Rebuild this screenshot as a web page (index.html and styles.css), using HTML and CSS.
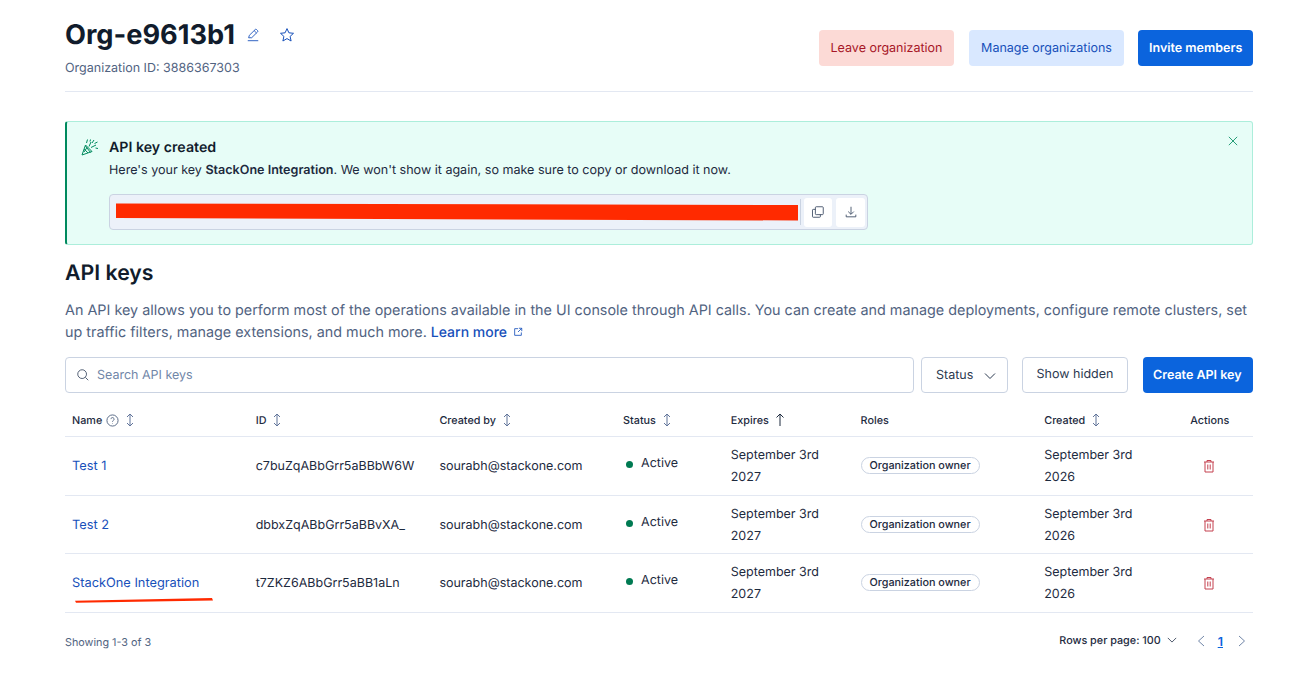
FILE: index.html
```html
<!DOCTYPE html>
<html lang="en">
<head>
<meta charset="utf-8">
<title>Org-e9613b1</title>
<link rel="stylesheet" href="styles.css">
</head>
<body>
<main class="page">
  <header class="org-header">
    <div class="org-info">
      <div class="org-title-row">
        <h1>Org-e9613b1</h1>
        <svg class="ic edit" viewBox="0 0 16 16"><path d="M2 14.500h12M3 11.200 3.800 8.400 10.600 1.700a1 1 0 0 1 1.400 0l1.300 1.300a1 1 0 0 1 0 1.400L6.500 11.100z M9.300 3 12 5.700" /></svg>
        <svg class="ic star" viewBox="0 0 16 16"><path d="M8 1.600 9.900 5.800 14.500 6.300 11.100 9.400 12.100 14 8 11.600 3.900 14 4.900 9.400 1.500 6.300 6.100 5.800z"/></svg>
      </div>
      <p class="org-id">Organization ID: 3886367303</p>
    </div>
    <div class="org-actions">
      <button class="btn btn-danger">Leave organization</button>
      <button class="btn btn-soft">Manage organizations</button>
      <button class="btn btn-primary">Invite members</button>
    </div>
  </header>

  <section class="callout">
    <svg class="party" viewBox="0 0 18 18"><path d="M1 17 4.500 7 11 13.500z M3.200 11 7 15 M4.500 8 9.500 14.500 M6 9.500 3 14 M8 8.500 10 4 M5.500 5 6.500 1.500 M10 9.500 15 7 M9.500 1.500 9 3.500 M13 2 11 5 M16.500 4 13.500 5.500 M17 10.500 14.500 10"/></svg>
    <div class="callout-body">
      <h3>API key created</h3>
      <p>Here's your key <strong>StackOne Integration</strong>. We won't show it again, so make sure to copy or download it now.</p>
      <div class="key-box">
        <svg class="redact" viewBox="0 0 682 18" preserveAspectRatio="none"><polygon points="0,0.500 682,2 682,17.500 0,15"/></svg>
        <span class="key-sep"></span>
        <button class="key-btn"><svg class="ic dark" viewBox="0 0 16 16"><rect x="5" y="2" width="9" height="9" rx="1"/><path d="M5 5H2.500a.8.8 0 0 0-.8.8v7.400a.8.8 0 0 0 .8.8h7.400a.8.8 0 0 0 .8-.8V11"/></svg></button>
        <button class="key-btn"><svg class="ic dark" viewBox="0 0 16 16"><path d="M8 2v8.500M4.800 7.500 8 10.700l3.200-3.200M2.500 11v2.500h11V11"/></svg></button>
      </div>
    </div>
    <svg class="close" viewBox="0 0 12 12"><path d="M1 1 11 11M11 1 1 11"/></svg>
  </section>

  <h2>API keys</h2>
  <p class="intro">An API key allows you to perform most of the operations available in the UI console through API calls. You can create and manage deployments, configure remote clusters, set up traffic filters, manage extensions, and much more. <a href="#">Learn more</a> <svg class="ext" viewBox="0 0 12 12"><path d="M6 2H2v8h8V6.500M7 1.500h3.500V5M10.500 1.500 6 6"/></svg></p>

  <div class="toolbar">
    <label class="search">
      <svg class="ic dark" viewBox="0 0 16 16"><circle cx="7" cy="7" r="5"/><path d="M10.700 10.700 14 14"/></svg>
      <span>Search API keys</span>
    </label>
    <button class="btn btn-outline status-btn">Status <svg class="chev" viewBox="0 0 12 12"><path d="M1 3.500 6 8.500l5-5"/></svg></button>
    <button class="btn btn-outline hidden-btn">Show hidden</button>
    <button class="btn btn-primary create-btn">Create API key</button>
  </div>

  <table>
    <colgroup>
      <col class="c-name"><col class="c-id"><col class="c-by"><col class="c-status"><col class="c-exp"><col class="c-roles"><col class="c-created"><col class="c-act">
    </colgroup>
    <thead>
      <tr>
        <th>Name <svg class="help" viewBox="0 0 14 14"><circle cx="7" cy="7" r="6"/><path d="M5.300 5.500a1.700 1.700 0 1 1 2.600 1.500c-.6.400-.9.700-.9 1.300M7 10.200v.5"/></svg> <svg class="sort" viewBox="0 0 10 14"><path d="M5 1v12M2 4 5 1l3 3M2 10l3 3 3-3"/></svg></th>
        <th>ID <svg class="sort" viewBox="0 0 10 14"><path d="M5 1v12M2 4 5 1l3 3M2 10l3 3 3-3"/></svg></th>
        <th>Created by <svg class="sort" viewBox="0 0 10 14"><path d="M5 1v12M2 4 5 1l3 3M2 10l3 3 3-3"/></svg></th>
        <th>Status <svg class="sort" viewBox="0 0 10 14"><path d="M5 1v12M2 4 5 1l3 3M2 10l3 3 3-3"/></svg></th>
        <th>Expires <svg class="sort up" viewBox="0 0 10 14"><path d="M5 1v12M1.500 4.500 5 1l3.500 3.500"/></svg></th>
        <th>Roles</th>
        <th>Created <svg class="sort" viewBox="0 0 10 14"><path d="M5 1v12M2 4 5 1l3 3M2 10l3 3 3-3"/></svg></th>
        <th>Actions</th>
      </tr>
    </thead>
    <tbody>
      <tr>
        <td><a href="#">Test 1</a></td>
        <td>c7buZqABbGrr5aBBbW6W</td>
        <td>sourabh@stackone.com</td>
        <td><span class="active"><i></i>Active</span></td>
        <td>September 3rd 2027</td>
        <td><span class="badge">Organization owner</span></td>
        <td class="wrap">September 3rd 2026</td>
        <td class="act"><svg class="trash" viewBox="0 0 12 14"><path d="M1 3h10M4 3V1.500h4V3M2 3v10h8V3M4.800 5.500v5M7.200 5.500v5"/></svg></td>
      </tr>
      <tr>
        <td><a href="#">Test 2</a></td>
        <td>dbbxZqABbGrr5aBBvXA_</td>
        <td>sourabh@stackone.com</td>
        <td><span class="active"><i></i>Active</span></td>
        <td>September 3rd 2027</td>
        <td><span class="badge">Organization owner</span></td>
        <td class="wrap">September 3rd 2026</td>
        <td class="act"><svg class="trash" viewBox="0 0 12 14"><path d="M1 3h10M4 3V1.500h4V3M2 3v10h8V3M4.800 5.500v5M7.200 5.500v5"/></svg></td>
      </tr>
      <tr>
        <td class="name-mark"><a href="#">StackOne Integration</a><svg class="scribble" viewBox="0 0 138 5"><polygon points="0,2.800 137,0 138,2.600 1,4.800"/></svg></td>
        <td>t7ZKZ6ABbGrr5aBB1aLn</td>
        <td>sourabh@stackone.com</td>
        <td><span class="active"><i></i>Active</span></td>
        <td>September 3rd 2027</td>
        <td><span class="badge">Organization owner</span></td>
        <td class="wrap">September 3rd 2026</td>
        <td class="act"><svg class="trash" viewBox="0 0 12 14"><path d="M1 3h10M4 3V1.500h4V3M2 3v10h8V3M4.800 5.500v5M7.200 5.500v5"/></svg></td>
      </tr>
    </tbody>
  </table>

  <footer class="table-foot">
    <span class="showing">Showing 1-3 of 3</span>
    <div class="pager">
      <span class="rows">Rows per page: 100 <svg class="chev small" viewBox="0 0 12 12"><path d="M1 3.500 6 8.500l5-5"/></svg></span>
      <svg class="page-arrow first" viewBox="0 0 8 12"><path d="M7 1 1.500 6 7 11"/></svg>
      <a class="page-num" href="#">1</a>
      <svg class="page-arrow" viewBox="0 0 8 12"><path d="M1 1 6.500 6 1 11"/></svg>
    </div>
  </footer>
</main>
</body>
</html>
```

FILE: styles.css
```css
* { box-sizing: border-box; }
html, body { margin: 0; padding: 0; background: #fff; }
body { font-family: Inter, "Liberation Sans", sans-serif; color: #1d2a3e; font-size: 14px; text-rendering: geometricPrecision; }
svg { fill: none; stroke: currentColor; stroke-width: 1; flex: none; }
button { font-family: inherit; text-rendering: geometricPrecision; }
a { color: #1750ba; text-decoration: none; }

.page { margin-left: 65px; width: 1188px; padding-top: 16px; }

.org-header { display: flex; justify-content: space-between; align-items: flex-start; height: 76px; border-bottom: 1px solid #e3e8f2; }
.org-title-row { display: flex; align-items: center; height: 38px; }
h1 { margin: 0; font-size: 27.200px; line-height: 38px; font-weight: 700; color: #111c2c; }
.ic { width: 16px; height: 16px; }
.edit { margin-left: 11px; color: #1750ba; width: 14px; height: 14px; }
.star { margin-left: 19px; color: #1750ba; }
.org-id { margin: 6px 0 0; font-size: 12.500px; line-height: 18px; color: #516381; }
.org-actions { display: flex; gap: 14px; padding-top: 14px; }

.btn { height: 36px; border: 0; border-radius: 4px; font-size: 12.500px; line-height: 34px; padding: 2px 11px 0; white-space: nowrap; }
.btn-danger { background: #fcdad6; color: #a71627; width: 135px; margin-right: 1px; }
.btn-soft { background: #d9e8ff; color: #1750ba; width: 155px; }
.btn-primary { background: #0b64dd; color: #fff; font-weight: 600; width: 115px; }
.btn-outline { background: #fff; border: 1px solid #cad3e2; color: #2b394f; }

.callout { display: flex; margin-top: 29px; height: 124px; background: #e7fdf7; border: 1px solid #aceedb; border-left: 2px solid #008a5e; border-radius: 3px; padding: 15px 14px 0 14px; }
.party { width: 18px; height: 18px; color: #008a5e; margin-top: 1px; }
.callout-body { margin-left: 10px; flex: 1; }
.callout h3 { margin: 0; font-size: 14.200px; line-height: 21px; font-weight: 600; color: #111c2c; }
.callout p { margin: 3px 0 0; font-size: 12.560px; line-height: 19px; color: #1d2a3e; }
.callout strong { font-weight: 600; }
.key-box { display: flex; align-items: center; width: 759px; height: 36px; margin-top: 14px; padding: 0 2px 0 6px; background: #ecf1f9; border: 1px solid #cad3e2; border-radius: 4px; }
.redact { width: 682px; height: 18px; fill: #ff2a00; stroke: none; }
.key-sep { width: 1px; height: 26px; margin: 0 3px 0 2px; background: #cad3e2; }
.key-btn { width: 28px; height: 29px; margin-right: 4px; border: 0; border-radius: 3px; background: #fff; padding: 0; display: flex; align-items: center; justify-content: center; }
.key-btn:last-child { width: 29px; margin-right: 0; }
.dark { color: #3d4c64; width: 14px; height: 14px; }
.close { width: 10px; height: 10px; color: #008a5e; margin-top: -1px; }

h2 { margin: 14px 0 0; font-size: 21.300px; line-height: 28px; font-weight: 600; color: #111c2c; }
.intro { margin: 13px 0 0; font-size: 14.370px; line-height: 22px; color: #516381; }
.intro a { font-size: 14px; font-weight: 500; }
.ext { width: 10px; height: 10px; color: #1750ba; margin-left: 2px; }

.toolbar { display: flex; margin-top: 13px; height: 36px; }
.search { flex: 1; display: flex; align-items: center; gap: 7px; padding-left: 10px; border: 1px solid #cad3e2; border-radius: 4px; font-size: 12.500px; color: #7186a8; }
.status-btn { width: 87px; margin-left: 7px; display: flex; align-items: center; justify-content: space-between; padding: 1px 11px 0 14px; }
.chev { width: 12px; height: 12px; color: #2b394f; }
.hidden-btn { width: 106px; margin-left: 14px; padding-top: 0; }
.create-btn { width: 110px; margin-left: 15px; padding: 2px 12px 0 10px; }

table { width: 1188px; margin-top: 8px; border-collapse: collapse; table-layout: fixed; }
.c-name, .c-id, .c-by { width: 183.700px; }
.c-status { width: 107.700px; }
.c-exp { width: 129.800px; }
.c-roles { width: 183.700px; }
.c-created { width: 146px; }
.c-act { width: 70px; }
th { height: 35px; padding: 5px 7px 0; text-align: left; font-size: 10.800px; font-weight: 500; color: #1d2a3e; border-bottom: 1px solid #e3e8f2; white-space: nowrap; }
th svg { vertical-align: 1px; margin-top: -4px; margin-bottom: -4px; }
.help { width: 13px; height: 13px; color: #516381; margin-left: 1px; }
.sort { width: 10px; height: 14px; color: #61749a; margin-left: 3px; }
.sort.up { color: #1d2a3e; }
td { height: 59px; padding: 8px 7px 6px; font-size: 12.500px; line-height: 22px; color: #1d2a3e; border-bottom: 1px solid #e3e8f2; }
tbody tr:nth-child(2) td { height: 58px; padding-bottom: 5px; }
td a { font-size: 12.800px; }
td.wrap { padding-right: 30px; }
.name-mark { position: relative; }
.scribble { position: absolute; left: 10px; top: 44px; width: 138px; height: 5px; fill: #ff2a00; stroke: none; }
.active { display: inline-flex; align-items: center; padding-left: 3px; position: relative; top: -2px; }
.active i { width: 7px; height: 7px; border-radius: 50%; background: #007a52; margin-right: 8px; }
.badge { display: inline-block; height: 17px; line-height: 15px; padding: 0 8px; font-size: 10.800px; font-weight: 500; border: 1px solid #cad3e2; border-radius: 9px; white-space: nowrap; position: relative; top: -1px; }
.act { padding-left: 20px; }
.trash { display: block; width: 12px; height: 14px; color: #c4414f; margin-top: -2px; }

.table-foot { display: flex; justify-content: space-between; align-items: center; height: 57px; padding-right: 7px; }
.showing { font-size: 10.800px; color: #516381; padding-top: 2px; }
.pager { display: flex; align-items: center; font-size: 10.800px; color: #1d2a3e; }
.rows { display: flex; align-items: center; gap: 6px; font-weight: 500; margin-bottom: 2px; }
.small { width: 10px; height: 10px; }
.page-arrow { width: 8px; height: 12px; color: #7186a8; }
.first { margin-left: 20px; }
.page-num { margin: 2px 15px 0 13px; font-size: 12.500px; font-weight: 600; text-decoration: underline; color: #0b64dd; }
```
